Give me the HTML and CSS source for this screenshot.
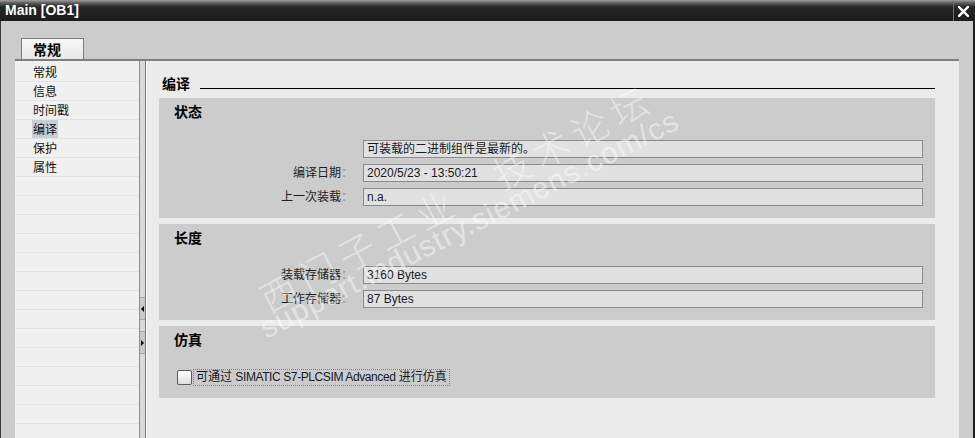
FILE: index.html
```html
<!DOCTYPE html>
<html lang="zh-CN">
<head>
<meta charset="utf-8">
<title>Main [OB1]</title>
<link rel="stylesheet" href="styles.css">
</head>
<body>
<div class="window">
  <div class="titlebar">
    <span class="title">Main [OB1]</span>
    <div class="close">
      <svg width="11" height="11" viewBox="0 0 11 11"><path d="M1 1 L10 10 M10 1 L1 10" stroke="#fff" stroke-width="2.4" stroke-linecap="square"/></svg>
    </div>
  </div>
  <div class="frame">
    <div class="tabs"><div class="tab">常规</div></div>
    <div class="box">
      <nav class="nav">
        <div class="nav-item">常规</div>
        <div class="nav-item">信息</div>
        <div class="nav-item">时间戳</div>
        <div class="nav-item"><span class="selected">编译</span></div>
        <div class="nav-item">保护</div>
        <div class="nav-item">属性</div>
        <div class="nav-item"></div>
        <div class="nav-item"></div>
        <div class="nav-item"></div>
        <div class="nav-item"></div>
        <div class="nav-item"></div>
        <div class="nav-item"></div>
        <div class="nav-item"></div>
        <div class="nav-item"></div>
        <div class="nav-item"></div>
        <div class="nav-item"></div>
        <div class="nav-item"></div>
        <div class="nav-item"></div>
        <div class="nav-item"></div>
        <div class="nav-item"></div>
      </nav>
      <div class="splitter">
        <div class="split-btn"><span class="arrow-left"></span></div>
        <div class="split-btn second"><span class="arrow-right"></span></div>
      </div>
      <main class="content">
        <div class="heading">
          <span class="heading-text">编译</span>
          <span class="heading-rule"></span>
        </div>
        <section class="panel">
          <div class="panel-title">状态</div>
          <div class="fields">
            <div class="label"></div>
            <div class="field">可装载的二进制组件是最新的。</div>
            <div class="label">编译日期<span class="colon">：</span></div>
            <div class="field">2020/5/23 - 13:50:21</div>
            <div class="label">上一次装载<span class="colon">：</span></div>
            <div class="field">n.a.</div>
          </div>
        </section>
        <section class="panel">
          <div class="panel-title">长度</div>
          <div class="fields">
            <div class="label">装载存储器<span class="colon">：</span></div>
            <div class="field">3160 Bytes</div>
            <div class="label">工作存储器<span class="colon">：</span></div>
            <div class="field">87 Bytes</div>
          </div>
        </section>
        <section class="panel">
          <div class="panel-title">仿真</div>
          <div class="check-row">
            <span class="checkbox"></span>
            <span class="check-label">可通过 <span class="tight">SIMATIC S7-PLCSIM Advanced</span> 进行仿真</span>
          </div>
        </section>
      </main>
    </div>
  </div>
  <div class="watermark wm-cn">西门子工业　技术论坛</div>
  <div class="watermark wm-url">support.industry.siemens.com/cs</div>
</div>
</body>
</html>
```

FILE: styles.css
```css
* { box-sizing: border-box; }
html, body { margin: 0; padding: 0; }
body {
  width: 975px;
  height: 438px;
  overflow: hidden;
  background: #cccccc;
  font-family: "Liberation Sans", "Noto Sans CJK SC", sans-serif;
  font-size: 12px;
  color: #1a1a1a;
}
.window {
  position: relative;
  width: 975px;
  height: 438px;
  display: flex;
  flex-direction: column;
  overflow: hidden;
}
.titlebar {
  height: 21px;
  flex: none;
  display: flex;
  align-items: center;
  padding-right: 3px;
  background: linear-gradient(#a0a0a0 0, #5c5c5c 3px, #262626 7px, #1b1b1b 100%);
  color: #fff;
}
.title {
  flex: 1;
  padding-left: 5px;
  font-weight: bold;
  font-size: 14px;
  line-height: 21px;
}
.close {
  width: 19px;
  height: 21px;
  border-left: 1px solid #707070;
  display: flex;
  align-items: center;
  justify-content: center;
  padding-top: 1px;
}
.close svg { display: block; }
.frame {
  flex: 1;
  min-height: 0;
  display: flex;
  flex-direction: column;
  border-left: 1px solid #3a3a3a;
  border-right: 2px solid #1e1e1e;
  padding: 0 14px 0 14px;
}
.tabs {
  height: 38px;
  flex: none;
  display: flex;
  align-items: flex-end;
  padding-left: 6px;
}
.tab {
  width: 63px;
  height: 21px;
  border: 1px solid #7c7c7c;
  border-bottom: none;
  background: linear-gradient(#f7f7f7, #e8e8e8);
  font-family: "Noto Sans CJK SC", sans-serif;
  font-weight: bold;
  font-size: 14px;
  line-height: 20px;
  padding-left: 11px;
  color: #000;
}
.box {
  flex: 1;
  min-height: 0;
  display: flex;
  border-top: 2px solid #808080;
}
.nav {
  width: 124px;
  flex: none;
  background: #f0f0f0;
  padding-top: 2px;
  overflow: hidden;
}
.nav-item {
  height: 19px;
  border-bottom: 1px solid #e2e2e2;
  padding-left: 18px;
  line-height: 18px;
  font-family: "Noto Sans CJK SC", sans-serif;
  font-size: 12px;
  color: #111;
}
.selected {
  display: inline-block;
  height: 18px;
  margin-left: -1px;
  padding: 0 1px;
  background: #c6ceda;
}
.splitter {
  width: 7px;
  flex: none;
  background: #dadada;
  border-left: 1px solid #8e8e8e;
  border-right: 1px solid #7a7a7a;
  padding-top: 236px;
}
.split-btn {
  height: 23px;
  background: #c9c9c9;
  border-top: 1px solid #a9a9a9;
  border-bottom: 1px solid #a9a9a9;
  display: flex;
  align-items: center;
  justify-content: center;
}
.split-btn.second { margin-top: 11px; }
.arrow-left {
  width: 0; height: 0;
  border-top: 3px solid transparent;
  border-bottom: 3px solid transparent;
  border-right: 3px solid #000;
}
.arrow-right {
  width: 0; height: 0;
  border-top: 3px solid transparent;
  border-bottom: 3px solid transparent;
  border-left: 3px solid #000;
}
.content {
  flex: 1;
  min-width: 0;
  background: #ebebeb;
  border-left: 1px solid #ffffff;
  padding: 12px 24px 0 12px;
}
.heading {
  display: flex;
  height: 20px;
  padding-left: 3px;
  margin-bottom: 5px;
}
.heading-text {
  font-family: "Noto Sans CJK SC", sans-serif;
  font-weight: bold;
  font-size: 14px;
  line-height: 20px;
  color: #000;
}
.heading-rule {
  flex: 1;
  height: 1px;
  margin: 15px 0 0 10px;
  background: #000;
}
.panel {
  background: #cccccc;
  padding: 3px 12px 12px 0;
  margin-bottom: 6px;
}
.panel-title {
  height: 20px;
  margin-bottom: 19px;
  padding-left: 15px;
  font-family: "Noto Sans CJK SC", sans-serif;
  font-weight: bold;
  font-size: 14px;
  line-height: 20px;
  color: #000;
}
.fields {
  display: grid;
  grid-template-columns: 194px 1fr;
  column-gap: 10px;
  row-gap: 6px;
}
.label {
  text-align: right;
  line-height: 18px;
  height: 18px;
  color: #1e1e1e;
}
.colon { color: #8c8c8c; }
.field {
  height: 18px;
  border: 1px solid #8a8a8a;
  background: #e1e1e1;
  padding-left: 3px;
  line-height: 16px;
  color: #151a2a;
  white-space: nowrap;
  overflow: hidden;
}
.check-row {
  display: flex;
  align-items: center;
  height: 18px;
  padding-left: 18px;
}
.checkbox {
  width: 15px;
  height: 15px;
  flex: none;
  border: 1px solid #5c5c5c;
  border-radius: 2px;
  background: linear-gradient(#ffffff, #dedede);
}
.check-label {
  margin-left: 1px;
  height: 17px;
  line-height: 15px;
  padding: 0 2px;
  border: 1px dotted #7080a8;
  color: #151a2a;
  white-space: nowrap;
}
.tight { letter-spacing: -0.4px; }
.watermark {
  position: absolute;
  color: #ffffff;
  opacity: 0.45;
  white-space: nowrap;
  transform-origin: 0 50%;
  pointer-events: none;
}
.wm-cn {
  left: 262px;
  top: 282px;
  font-family: "Noto Sans CJK SC", sans-serif;
  font-weight: 300;
  font-size: 37px;
  line-height: 37px;
  letter-spacing: 7px;
  transform: rotate(-28deg);
}
.wm-url {
  left: 262px;
  top: 315px;
  font-family: "Liberation Sans", sans-serif;
  font-size: 30px;
  line-height: 30px;
  letter-spacing: 1px;
  transform: rotate(-27deg);
}
```
